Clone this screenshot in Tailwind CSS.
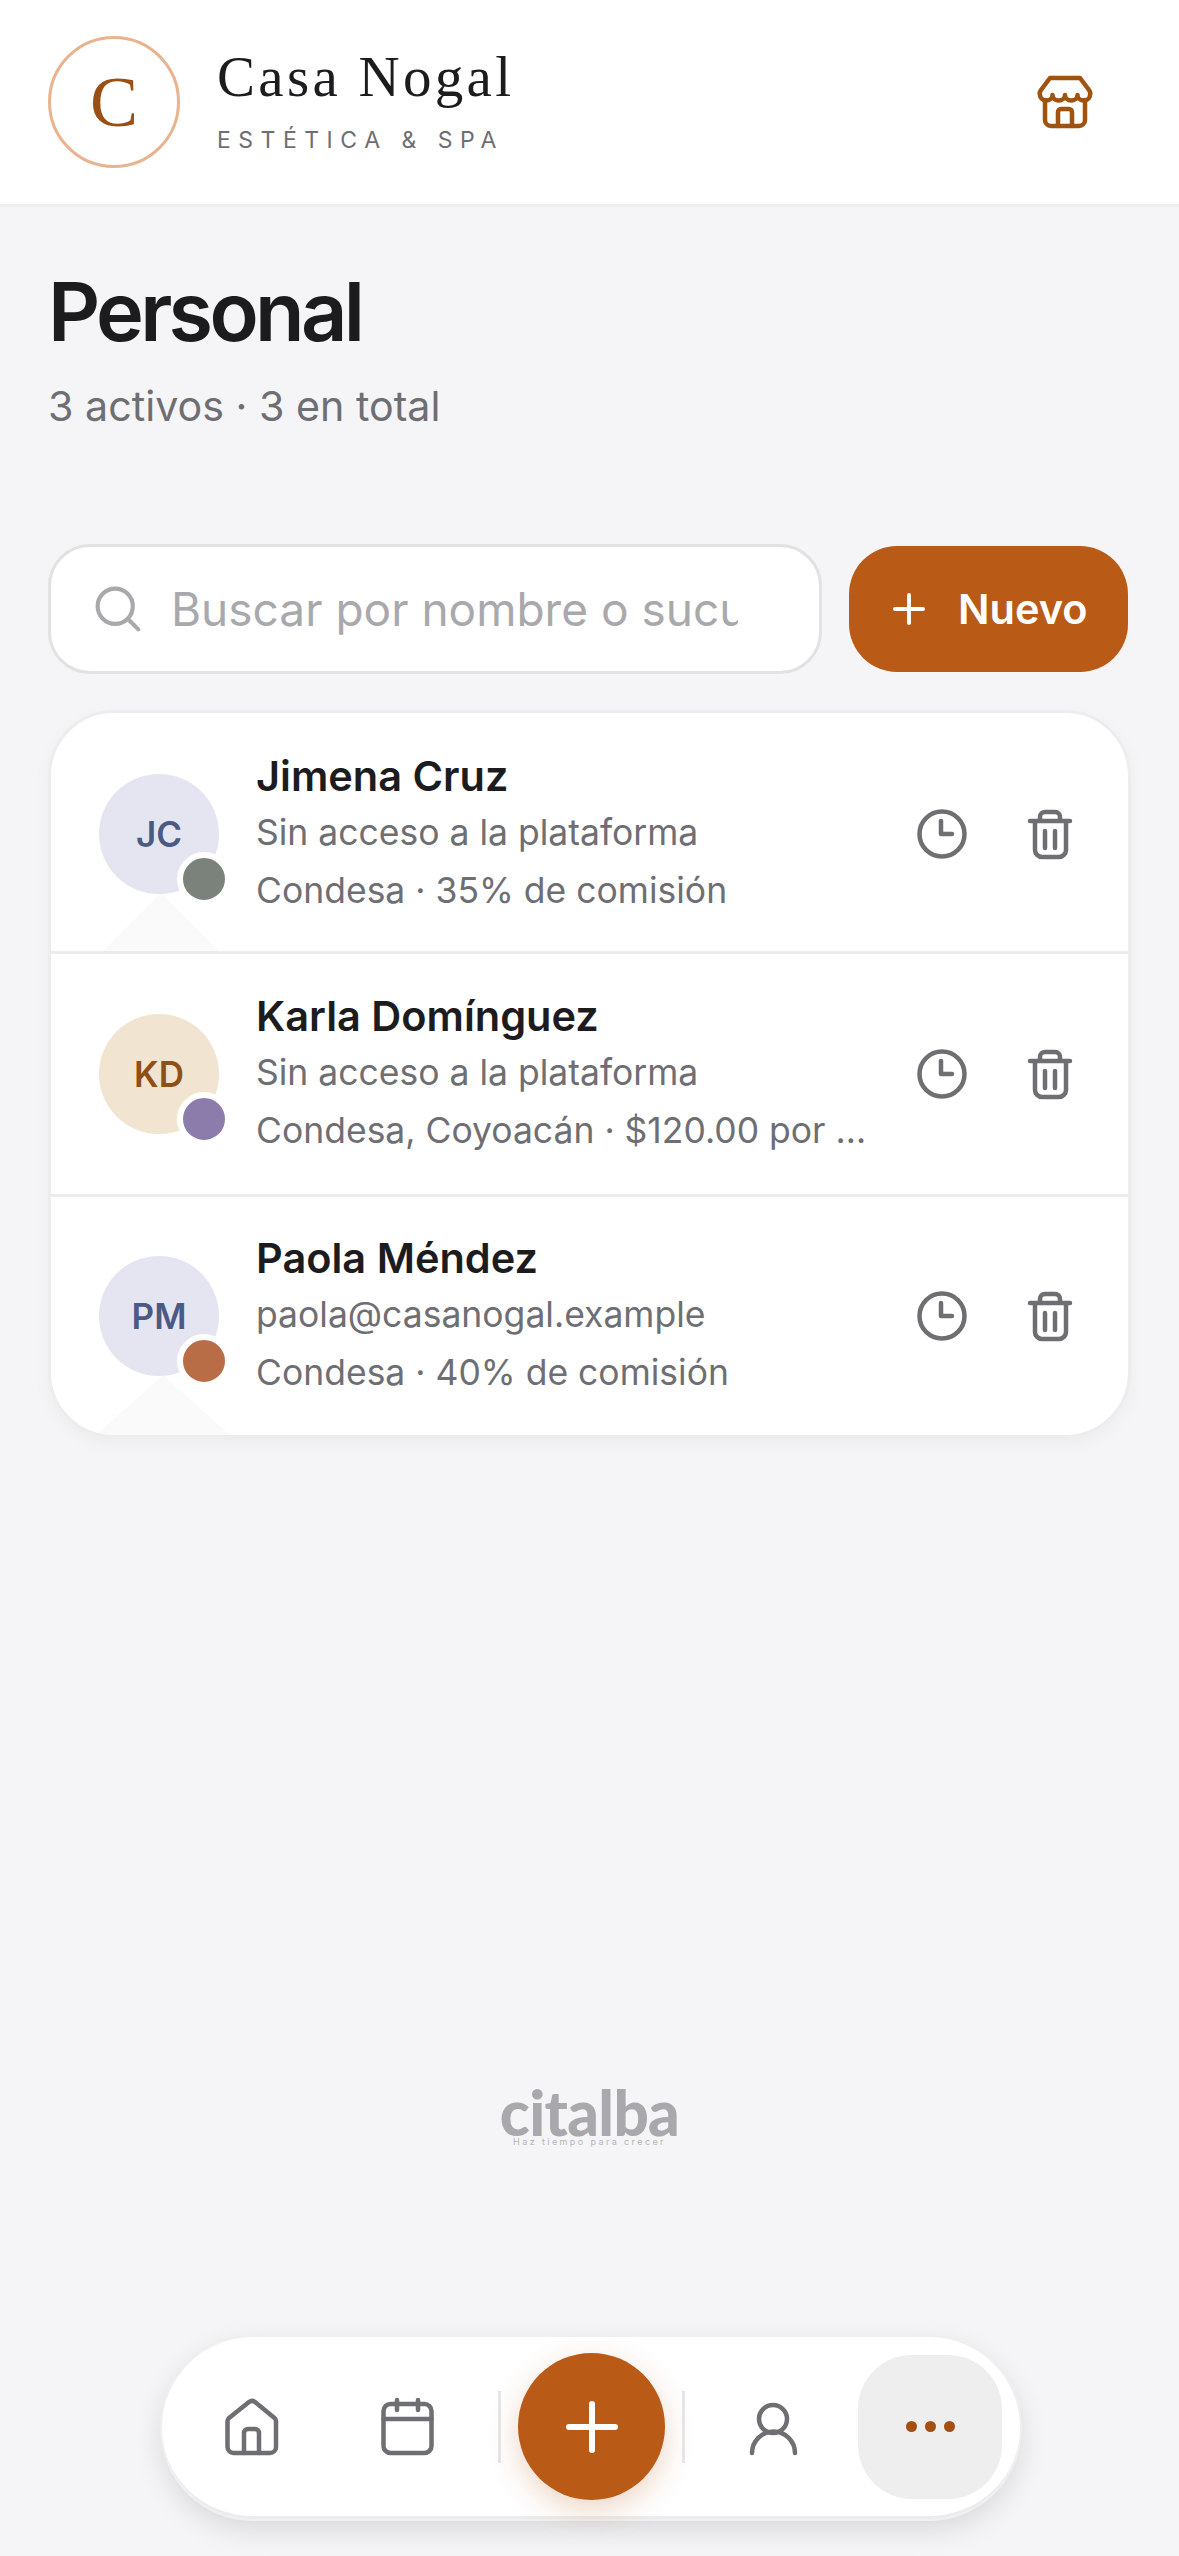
<!DOCTYPE html>
<html lang="es">
<head>
    <meta charset="UTF-8">
    <meta name="viewport" content="width=device-width, initial-scale=1.0">
    <title>Personal - Casa Nogal</title>
    <script src="https://cdn.jsdelivr.net/npm/@tailwindcss/browser@4"></script>
</head>
<body class="relative w-[1179px] h-[2556px] overflow-hidden bg-[#f5f5f7] font-['Inter',sans-serif] text-[#1c1c1e]">

    <!-- Header -->
    <header class="h-[207px] pl-[48px] pr-[84px] flex items-center bg-white border-b-[3px] border-[#f0f0f2]">
        <div class="w-[132px] h-[132px] rounded-full border-[3px] border-[#e8b48f] flex items-center justify-center font-['Liberation_Serif',serif] text-[72px] text-[#9a4f14]">C</div>
        <div class="ml-[37px] flex-1 pb-[4px]">
            <div class="font-['Liberation_Serif',serif] text-[57px] leading-[64px] tracking-[3.3px]">Casa Nogal</div>
            <div class="mt-[16px] text-[23px] leading-[30px] tracking-[7.5px] text-[#6e6e73]">ESTÉTICA &amp; SPA</div>
        </div>
        <svg class="w-[60px] h-[60px]" viewBox="0 0 60 60" fill="none" stroke="#a0520f" stroke-width="4.5" stroke-linecap="round" stroke-linejoin="round">
            <path d="M15 6H45L54 18Q56 21 55 23A6.25 5.5 0 0 1 42.5 23A6.25 5.5 0 0 1 30 23A6.25 5.5 0 0 1 17.5 23A6.25 5.5 0 0 1 5 23Q4 21 6 18Z"/>
            <path d="M10 28V48A6 6 0 0 0 16 54H44A6 6 0 0 0 50 48V28"/>
            <path d="M23 54V40A3 3 0 0 1 26 37H34A3 3 0 0 1 37 40V54"/>
        </svg>
    </header>

    <main class="pl-[48px] pr-[48px]">
        <h1 class="pt-[60px] text-[81px] leading-[90px] font-semibold tracking-[-3.7px]">Personal</h1>
        <p class="mt-[22px] text-[41.2px] leading-[54px] text-[#6e6e73]">3 activos · 3 en total</p>

        <!-- Search + new -->
        <div class="mt-[111px] flex items-center gap-[27px]">
            <label class="w-[774px] h-[130px] pl-[42px] pr-[81px] flex items-center bg-white rounded-[42px] border-[3px] border-[#e2e2e4]">
                <svg class="w-[50px] h-[50px] shrink-0" viewBox="0 0 54 54" fill="none" stroke="#a9a9ad" stroke-width="4.5" stroke-linecap="round">
                    <circle cx="24" cy="24" r="19"/>
                    <path d="M38 38L49 49"/>
                </svg>
                <input type="text" placeholder="Buscar por nombre o sucursal" class="ml-[28px] min-w-0 flex-1 bg-transparent outline-none text-[46px] placeholder:text-[#a9a9ad]">
            </label>
            <button class="w-[279px] h-[126px] pl-[44px] flex items-center bg-[#b95a16] rounded-[48px] text-white text-[41.5px] font-semibold">
                <svg class="w-[32px] h-[32px]" viewBox="0 0 32 32" fill="none" stroke="white" stroke-width="4" stroke-linecap="round">
                    <path d="M16 2V30M2 16H30"/>
                </svg>
                <span class="ml-[33px]">Nuevo</span>
            </button>
        </div>

        <!-- Staff list -->
        <section class="mt-[36px] bg-white rounded-[66px] border-[3px] border-[#ededee] shadow-[0_6px_18px_rgba(0,0,0,0.04)] overflow-hidden">

            <article class="relative h-[241px] pt-[4px] pl-[48px] pr-[48px] flex items-center border-b-[3px] border-[#ececee]">
                <svg class="absolute left-[52px] bottom-0 w-[116px] h-[58px]" viewBox="0 0 116 58"><path d="M58 0L116 58H0Z" fill="#fafafa"/></svg>
                <div class="relative w-[120px] h-[120px] shrink-0 rounded-full bg-[#e4e5f1] flex items-center justify-center text-[35px] font-semibold text-[#4a5a82]">
                    JC
                    <span class="absolute left-[78px] top-[78px] w-[54px] h-[54px] rounded-full bg-[#7a827b] border-[6px] border-white"></span>
                </div>
                <div class="relative ml-[37px] w-[612px] min-w-0">
                    <div class="text-[41.5px] leading-[57px] font-semibold truncate">Jimena Cruz</div>
                    <div class="text-[35.5px] leading-[56px] text-[#6e6e73] truncate">Sin acceso a la plataforma</div>
                    <div class="text-[35.5px] leading-[60px] text-[#6e6e73] truncate">Condesa · 35% de comisión</div>
                </div>
                <div class="relative ml-auto flex gap-[48px]">
                    <svg class="w-[60px] h-[60px]" viewBox="0 0 60 60" fill="none" stroke="#6e6e73" stroke-width="4.5" stroke-linecap="round" stroke-linejoin="round">
                        <circle cx="30" cy="30" r="22.5"/><path d="M29 17V30H40"/>
                    </svg>
                    <svg class="w-[60px] h-[60px]" viewBox="0 0 60 60" fill="none" stroke="#6e6e73" stroke-width="4.5" stroke-linecap="round" stroke-linejoin="round">
                        <path d="M10 17H50M15 17V46A7 7 0 0 0 22 53H39A7 7 0 0 0 46 46V17M20 17V13A5 5 0 0 1 25 8H35A5 5 0 0 1 40 13V17M25 27V44M35 27V44"/>
                    </svg>
                </div>
            </article>

            <article class="relative h-[243px] pl-[48px] pr-[48px] flex items-center border-b-[3px] border-[#ececee]">
                <div class="relative w-[120px] h-[120px] shrink-0 rounded-full bg-[#f1e4d0] flex items-center justify-center text-[35px] font-semibold text-[#8f4f17]">
                    KD
                    <span class="absolute left-[78px] top-[78px] w-[54px] h-[54px] rounded-full bg-[#8c7cab] border-[6px] border-white"></span>
                </div>
                <div class="relative ml-[37px] w-[612px] min-w-0">
                    <div class="text-[41.5px] leading-[57px] font-semibold truncate">Karla Domínguez</div>
                    <div class="text-[35.5px] leading-[56px] text-[#6e6e73] truncate">Sin acceso a la plataforma</div>
                    <div class="text-[35.5px] leading-[60px] text-[#6e6e73] truncate">Condesa, Coyoacán · $120.00 por servicio</div>
                </div>
                <div class="relative ml-auto flex gap-[48px]">
                    <svg class="w-[60px] h-[60px]" viewBox="0 0 60 60" fill="none" stroke="#6e6e73" stroke-width="4.5" stroke-linecap="round" stroke-linejoin="round">
                        <circle cx="30" cy="30" r="22.5"/><path d="M29 17V30H40"/>
                    </svg>
                    <svg class="w-[60px] h-[60px]" viewBox="0 0 60 60" fill="none" stroke="#6e6e73" stroke-width="4.5" stroke-linecap="round" stroke-linejoin="round">
                        <path d="M10 17H50M15 17V46A7 7 0 0 0 22 53H39A7 7 0 0 0 46 46V17M20 17V13A5 5 0 0 1 25 8H35A5 5 0 0 1 40 13V17M25 27V44M35 27V44"/>
                    </svg>
                </div>
            </article>

            <article class="relative h-[238px] pl-[48px] pr-[48px] flex items-center">
                <svg class="absolute left-[45px] bottom-0 w-[134px] h-[60px]" viewBox="0 0 134 60"><path d="M67 0L134 60H0Z" fill="#fafafa"/></svg>
                <div class="relative w-[120px] h-[120px] shrink-0 rounded-full bg-[#e4e5f1] flex items-center justify-center text-[35px] font-semibold text-[#4a5a82]">
                    PM
                    <span class="absolute left-[78px] top-[78px] w-[54px] h-[54px] rounded-full bg-[#b96d47] border-[6px] border-white"></span>
                </div>
                <div class="relative ml-[37px] w-[612px] min-w-0">
                    <div class="text-[41.5px] leading-[57px] font-semibold truncate">Paola Méndez</div>
                    <div class="text-[35.5px] leading-[56px] text-[#6e6e73] truncate">paola@casanogal.example</div>
                    <div class="text-[35.5px] leading-[60px] text-[#6e6e73] truncate">Condesa · 40% de comisión</div>
                </div>
                <div class="relative ml-auto flex gap-[48px]">
                    <svg class="w-[60px] h-[60px]" viewBox="0 0 60 60" fill="none" stroke="#6e6e73" stroke-width="4.5" stroke-linecap="round" stroke-linejoin="round">
                        <circle cx="30" cy="30" r="22.5"/><path d="M29 17V30H40"/>
                    </svg>
                    <svg class="w-[60px] h-[60px]" viewBox="0 0 60 60" fill="none" stroke="#6e6e73" stroke-width="4.5" stroke-linecap="round" stroke-linejoin="round">
                        <path d="M10 17H50M15 17V46A7 7 0 0 0 22 53H39A7 7 0 0 0 46 46V17M20 17V13A5 5 0 0 1 25 8H35A5 5 0 0 1 40 13V17M25 27V44M35 27V44"/>
                    </svg>
                </div>
            </article>
        </section>

        <!-- Footer brand -->
        <div class="mt-[650px] flex flex-col items-center text-[#a9a9ad]">
            <div class="font-['Lato',sans-serif] font-black text-[62px] leading-[48px] tracking-[-0.7px]">citalba</div>
            <div class="text-[9px] leading-[12px] tracking-[2.4px] text-[#b4b4b7]">Haz tiempo para crecer</div>
        </div>
    </main>

    <!-- Bottom nav, floats over the page -->
    <nav class="absolute left-[162px] top-[2337px] w-[858px] h-[182px] pl-[18px] flex items-center bg-white rounded-[91px] border-b-[3px] border-[#ececee] shadow-[0_0_0_2px_#f0f0f1,0_10px_30px_rgba(0,0,0,0.12)]">
        <div class="w-[144px] h-[144px] flex items-center justify-center">
            <svg class="w-[60px] h-[60px]" viewBox="0 0 60 60" fill="none" stroke="#6e6e73" stroke-width="4.5" stroke-linecap="round" stroke-linejoin="round">
                <path d="M5.5 24A4 4 0 0 1 7 21L27 5A5 5 0 0 1 33 5L52.5 21A4 4 0 0 1 54 24V50A6 6 0 0 1 48 56H11.5A6 6 0 0 1 5.5 50Z"/>
                <path d="M22 56V36A4 4 0 0 1 26 32H33A4 4 0 0 1 37 36V56"/>
            </svg>
        </div>
        <div class="ml-[11px] w-[144px] h-[144px] flex items-center justify-center">
            <svg class="w-[60px] h-[60px]" viewBox="0 0 60 60" fill="none" stroke="#6e6e73" stroke-width="4.5" stroke-linecap="round" stroke-linejoin="round">
                <rect x="6.5" y="7" width="48" height="49" rx="7"/>
                <path d="M6.5 22H54.5M20 3V13M41 3V13"/>
            </svg>
        </div>
        <div class="ml-[19px] w-[3px] h-[72px] bg-[#e6e6e8]"></div>
        <button class="ml-[17px] w-[147px] h-[147px] rounded-full bg-[#b95a16] flex items-center justify-center shadow-[0_10px_30px_rgba(185,90,22,0.25)]">
            <svg class="w-[52px] h-[52px]" viewBox="0 0 52 52" fill="none" stroke="white" stroke-width="6" stroke-linecap="round">
                <path d="M26 3V49M3 26H49"/>
            </svg>
        </button>
        <div class="ml-[17px] w-[3px] h-[72px] bg-[#e6e6e8]"></div>
        <div class="ml-[16px] w-[144px] h-[144px] flex items-center justify-center">
            <svg class="w-[60px] h-[60px]" viewBox="0 0 60 60" fill="none" stroke="#6e6e73" stroke-width="4.5" stroke-linecap="round" stroke-linejoin="round">
                <circle cx="30" cy="22" r="14"/>
                <path d="M9 56A21.5 21.5 0 0 1 52 56"/>
            </svg>
        </div>
        <div class="ml-[13px] w-[144px] h-[144px] rounded-[54px] bg-[#eeeeef] flex items-center justify-center gap-[8px]">
            <span class="w-[11px] h-[11px] rounded-full bg-[#a34f13]"></span>
            <span class="w-[11px] h-[11px] rounded-full bg-[#a34f13]"></span>
            <span class="w-[11px] h-[11px] rounded-full bg-[#a34f13]"></span>
        </div>
    </nav>
</body>
</html>
